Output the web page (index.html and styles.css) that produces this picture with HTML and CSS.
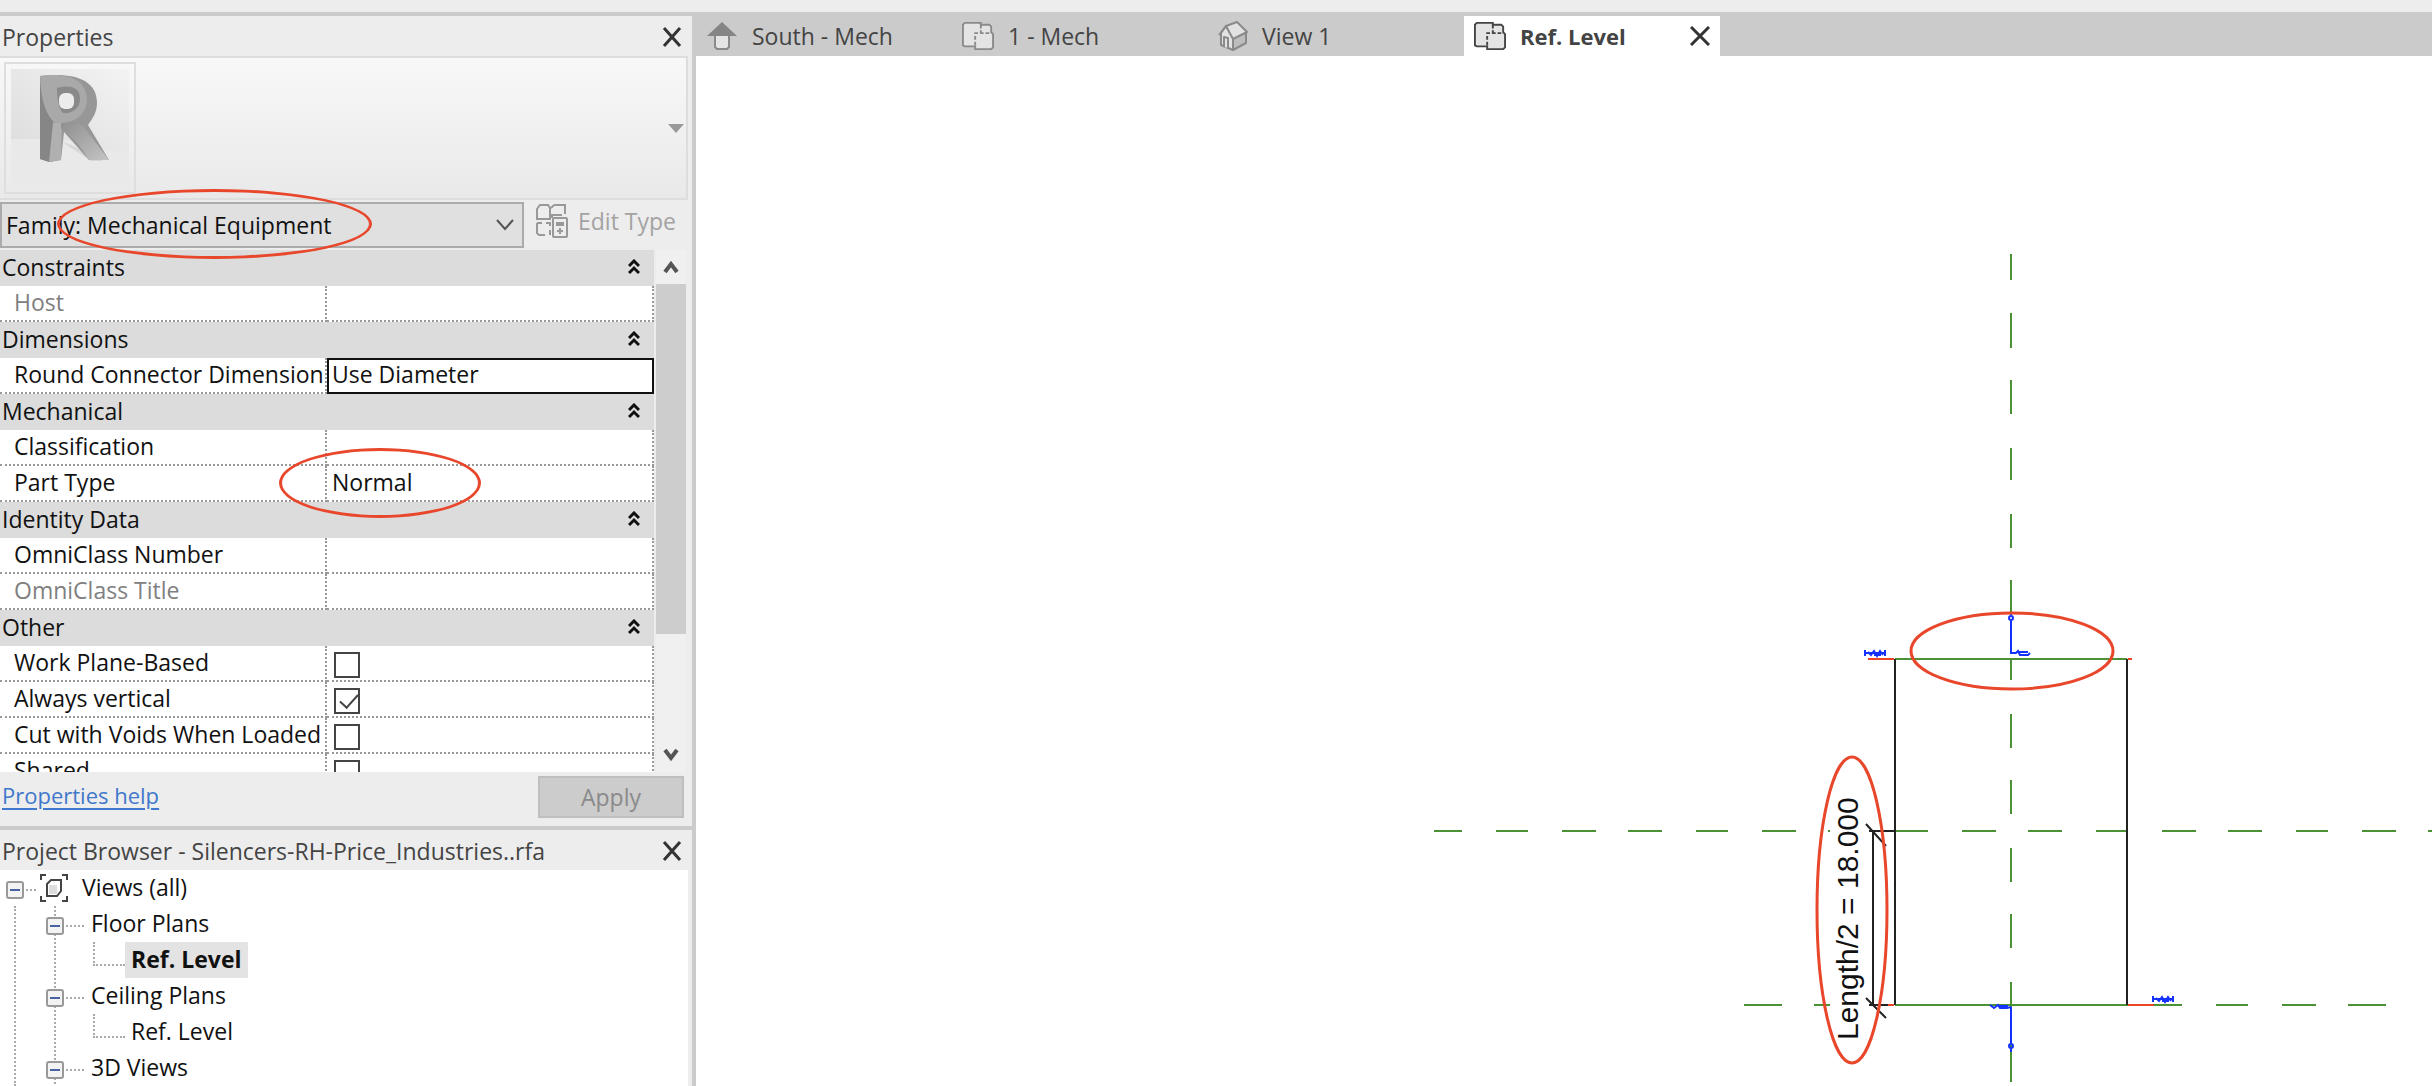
FILE: index.html
```html
<!DOCTYPE html>
<html lang="en">

<head>
    <meta charset="UTF-8">
    <meta name="viewport" content="width=device-width, initial-scale=1.0">
    <title>Ref. Level</title>
    <link rel="stylesheet" href="styles.css">
</head>

<body>
    <div class="ribbon-edge"></div>
    <div class="workspace">
        <aside class="sidebar">
            <section class="palette properties">
                <header class="palette-header">
                    <h2>Properties</h2>
                    <button class="close-btn" aria-label="Close properties">
                        <svg width="20" height="20" viewBox="0 0 20 20"><path d="M2 1 18 19M18 1 2 19" /></svg>
                    </button>
                </header>

                <div class="type-preview">
                    <div class="thumb">
                        <svg width="118" height="118" viewBox="0 0 118 118">
                            <defs>
                                <linearGradient id="wall" x1="0" y1="1" x2="1" y2="0">
                                    <stop offset="0" stop-color="#dcdcdc" />
                                    <stop offset="1" stop-color="#f3f3f3" />
                                </linearGradient>
                                <linearGradient id="leg" x1="0" y1="0" x2="1" y2="1">
                                    <stop offset="0" stop-color="#8e8e8e" />
                                    <stop offset="1" stop-color="#c4c4c4" />
                                </linearGradient>
                            </defs>
                            <path d="M0 0H118V86L48 70H0Z" fill="url(#wall)" />
                            <path d="M0 70H48L118 86V118H0Z" fill="#e9e9e9" />
                            <path d="M50 72 80 92H92L60 76Z" fill="#d6d6d6" />
                            <path d="M29 7C62 3 86 10 86 34C86 44 81 50 77 56L98 91H78L53 63L50 91L39 93L29 90Z" fill="#979797" />
                            <path d="M29 7 42 50V92L38 93L29 90Z" fill="#868686" />
                            <path d="M42 54H51L50 91L38 93Z" fill="#b0b0b0" />
                            <path d="M50 53Q62 50 72 57L98 91H78Q66 70 50 60Z" fill="url(#leg)" />
                            <path d="M29 7C60 3 76 12 76 32C74 48 62 55 44 54Q30 42 29 7Z" fill="#a9a9a9" />
                            <path d="M46 19C62 15 69 20 69 30C69 40 60 45 52 44Q46 38 46 19Z" fill="#8a8a8a" />
                            <rect x="48" y="24" width="15" height="16" rx="6" fill="#ececec" />
                        </svg>
                    </div>
                    <svg class="preview-arrow" width="16" height="9" viewBox="0 0 16 9"><path d="M0 0H16L8 9Z" /></svg>
                </div>

                <div class="type-bar">
                    <button class="family-select">
                        <span>Family: Mechanical Equipment</span>
                        <svg width="18" height="12" viewBox="0 0 18 12"><path d="M1 1 9 10 17 1" /></svg>
                    </button>
                    <button class="edit-type" disabled>
                        <svg width="32" height="34" viewBox="0 0 32 34">
                            <path d="M4 1H12L14 4V15H1V5ZM18 1H29V10M15 4 18 1M16 14V11H26M1 19V29L3 31H9M6 19H1M10 19H14V22M14 26V31" />
                            <rect x="17" y="14" width="14" height="19" rx="1" />
                            <path d="M20 19H28M20 21H28M24 24V30M21 27H27" />
                        </svg>
                        Edit Type
                    </button>
                </div>
                <div class="markup markup-family"></div>

                <div class="grid-area">
                    <div class="grid-scroll">
                        <table class="params">
                            <tbody>
                                <tr class="group"><th colspan="2">Constraints<svg class="fold" viewBox="0 0 12 16"><path d="M1 7 6 2 11 7M1 14 6 9 11 14" /></svg></th></tr>
                                <tr class="dim"><td>Host</td><td></td></tr>
                                <tr class="group"><th colspan="2">Dimensions<svg class="fold" viewBox="0 0 12 16"><path d="M1 7 6 2 11 7M1 14 6 9 11 14" /></svg></th></tr>
                                <tr><td>Round Connector Dimension</td><td class="active">Use Diameter</td></tr>
                                <tr class="group"><th colspan="2">Mechanical<svg class="fold" viewBox="0 0 12 16"><path d="M1 7 6 2 11 7M1 14 6 9 11 14" /></svg></th></tr>
                                <tr><td>Classification</td><td></td></tr>
                                <tr><td>Part Type</td><td>Normal</td></tr>
                                <tr class="group"><th colspan="2">Identity Data<svg class="fold" viewBox="0 0 12 16"><path d="M1 7 6 2 11 7M1 14 6 9 11 14" /></svg></th></tr>
                                <tr><td>OmniClass Number</td><td></td></tr>
                                <tr class="dim"><td>OmniClass Title</td><td></td></tr>
                                <tr class="group"><th colspan="2">Other<svg class="fold" viewBox="0 0 12 16"><path d="M1 7 6 2 11 7M1 14 6 9 11 14" /></svg></th></tr>
                                <tr><td><label for="workPlane">Work Plane-Based</label></td><td><input type="checkbox" id="workPlane"></td></tr>
                                <tr><td><label for="vertical">Always vertical</label></td><td><input type="checkbox" id="vertical" checked></td></tr>
                                <tr><td><label for="voids">Cut with Voids When Loaded</label></td><td><input type="checkbox" id="voids"></td></tr>
                                <tr><td><label for="shared">Shared</label></td><td><input type="checkbox" id="shared"></td></tr>
                            </tbody>
                        </table>
                    </div>
                    <div class="scrollbar">
                        <svg width="16" height="14" viewBox="0 0 16 14"><path d="M2 12 8 4 14 12" /></svg>
                        <div class="track"><div class="scroll-thumb"></div></div>
                        <svg width="16" height="14" viewBox="0 0 16 14"><path d="M2 2 8 10 14 2" /></svg>
                    </div>
                    <div class="markup markup-part"></div>
                </div>

                <footer class="palette-footer">
                    <a href="#">Properties help</a>
                    <button class="apply" disabled>Apply</button>
                </footer>
            </section>

            <section class="palette browser">
                <header class="palette-header">
                    <h2>Project Browser - Silencers-RH-Price_Industries..rfa</h2>
                    <button class="close-btn" aria-label="Close project browser">
                        <svg width="20" height="20" viewBox="0 0 20 20"><path d="M2 1 18 19M18 1 2 19" /></svg>
                    </button>
                </header>
                <ul class="tree">
                    <li>
                        <div class="node root">
                            <button class="toggle" aria-label="Collapse"></button>
                            <i class="dots"></i>
                            <svg class="views-icon" width="28" height="28" viewBox="0 0 28 28">
                                <path d="M1 6V1H6M22 1H27V6M27 22V27H22M6 27H1V22" />
                                <path d="M7 10 11 6H21V17L17 22H7Z" />
                                <path class="face" d="M9 11H17V20H9Z" />
                            </svg>
                            <span>Views (all)</span>
                        </div>
                        <ul>
                            <li>
                                <div class="node"><button class="toggle" aria-label="Collapse"></button><i class="dots"></i><span>Floor Plans</span></div>
                                <div class="leaf"><a href="#" class="current">Ref. Level</a></div>
                            </li>
                            <li>
                                <div class="node"><button class="toggle" aria-label="Collapse"></button><i class="dots"></i><span>Ceiling Plans</span></div>
                                <div class="leaf"><a href="#">Ref. Level</a></div>
                            </li>
                            <li>
                                <div class="node"><button class="toggle" aria-label="Collapse"></button><i class="dots"></i><span>3D Views</span></div>
                            </li>
                        </ul>
                    </li>
                </ul>
            </section>
        </aside>

        <main class="view">
            <nav class="tabs">
                <a href="#" class="tab">
                    <svg width="32" height="30" viewBox="0 0 32 30"><path d="M9 14H23V26L21 28H11L9 26Z" fill="#e4e4e4" stroke="#8a8a8a" stroke-width="2" /><path d="M16 1 31 15H1Z" fill="#858585" /></svg>
                    South - Mech
                </a>
                <a href="#" class="tab">
                    <svg class="plan-icon" width="32" height="30" viewBox="0 0 34 30"><path class="sheet" d="M1 3 3 1H20V3H29L31 5V11L33 13V27L31 29H14V26H3L1 25Z" /><path class="cut" d="M14 25V12H30M20 3V11" /></svg>
                    1 - Mech
                </a>
                <a href="#" class="tab">
                    <svg width="30" height="30" viewBox="0 0 30 30"><g fill="#e2e2e2" stroke="#8a8a8a" stroke-width="2" stroke-linejoin="round"><path d="M3 12 8 5 15 17V29L3 24Z" /><path d="M15 17 28 11V22L15 29Z" fill="#bdbdbd" /><path d="M8 5 19 1 29 11 15 18Z" /><path d="M1 14 8 5" /><path d="M6 26V16L10 17V27" /></g></svg>
                    View 1
                </a>
                <a href="#" class="tab selected">
                    <svg class="plan-icon" width="32" height="30" viewBox="0 0 34 30"><path class="sheet" d="M1 3 3 1H20V3H29L31 5V11L33 13V27L31 29H14V26H3L1 25Z" /><path class="cut" d="M14 25V12H30M20 3V11" /></svg>
                    <span>Ref. Level</span>
                    <svg class="tab-close" width="20" height="20" viewBox="0 0 20 20"><path d="M1 1 19 19M19 1 1 19" /></svg>
                </a>
            </nav>

            <svg class="drawing" viewBox="696 56 1736 1030" preserveAspectRatio="xMidYMid meet">
                <!-- reference planes -->
                <g class="plane">
                    <path d="M2011 254V280M2011 313V348M2011 380V414M2011 448V480M2011 514V548M2011 580V612M2011 660V680M2011 714V748M2011 780V814M2011 848V882M2011 914V948M2011 982V1082" />
                    <path d="M1434 831H1462M1496 831H1528M1562 831H1596M1628 831H1662M1696 831H1728M1762 831H1796M1828 831H1830M1895 831H1928M1962 831H1996M2028 831H2062M2096 831H2127M2162 831H2196M2228 831H2262M2296 831H2328M2362 831H2396M2428 831H2432" />
                    <path d="M1744 1005H1782M1814 1005H1830M1895 1005H2182M2216 1005H2248M2282 1005H2316M2348 1005H2386" />
                    <path d="M1895 659H2127" />
                </g>
                <path class="sketch" d="M1868 659H1894M2128 659H2132M1888 1005H1894M2128 1005H2154" />
                <path class="body" d="M1895 659V1005M2127 659V1005" />

                <!-- connectors -->
                <g class="connector">
                    <path d="M2011 621V653H2014M2011 612V615" /><circle cx="2011" cy="618" r="2" />
                    <path d="M2013 653H2016L2018 651 2020 655H2028L2030 653M2019 652H2028" />
                    <path d="M1865 650V656M1885 650V656M1865 653H1885M1868 652 1871 655 1874 651 1877 656 1880 651 1883 655M1874 655H1881" />
                    <path d="M2011 1007V1043M2011 1049V1052" /><circle cx="2011" cy="1046" r="2" />
                    <path d="M1990 1005 1994 1008 1998 1005 2000 1008H2007L2011 1007M1999 1006H2008" />
                    <path d="M2153 996V1002M2173 996V1002M2153 999H2173M2156 998 2159 1001 2162 997 2165 1002 2168 997 2171 1001M2162 1001H2169" />
                </g>

                <!-- length dimension -->
                <path class="body" d="M1873 831V1005M1869 831H1895M1869 1005H1888" />
                <path class="tick" d="M1866 824 1886 846M1866 998 1886 1018" />
                <text class="dim-text" transform="translate(1858 1040) rotate(-90)">Length/2 = 18.000</text>

                <g class="redline">
                    <ellipse cx="2012" cy="651" rx="101" ry="38" />
                    <ellipse cx="1852" cy="910" rx="35" ry="153" />
                </g>
            </svg>
        </main>
    </div>
</body>

</html>
```
FILE: styles.css
```css
* {
    box-sizing: border-box;
}

body {
    margin: 0;
    height: 100vh;
    display: flex;
    flex-direction: column;
    overflow: hidden;
    background-color: #ededed;
    font-family: "Open Sans", "Noto Sans", sans-serif;
    font-size: 23px;
    line-height: 32px;
    color: #111;
}

button {
    font: inherit;
    color: inherit;
    border: none;
    background: none;
    padding: 0;
}

svg {
    display: block;
    flex: none;
    fill: none;
}

.ribbon-edge {
    flex: none;
    height: 12px;
}

.workspace {
    flex: 1;
    min-height: 0;
    display: flex;
}

.sidebar {
    flex: none;
    width: 696px;
    display: flex;
    flex-direction: column;
    border-right: 4px solid #cbcbcb;
}

.palette {
    position: relative;
    border-top: 4px solid #cbcbcb;
}

.palette-header {
    height: 40px;
    display: flex;
    align-items: center;
    justify-content: space-between;
    padding: 2px 10px 0 2px;
}

.palette-header h2 {
    margin: 0;
    font-size: 23px;
    font-weight: 400;
    color: #444;
}

.close-btn svg,
.tab-close {
    stroke: #333;
    stroke-width: 3;
}

.type-preview {
    height: 144px;
    margin-right: 4px;
    padding: 5px 2px 5px 4px;
    display: flex;
    align-items: center;
    justify-content: space-between;
    border: 2px solid #ddd;
    border-left: none;
    background: linear-gradient(#f8f8f8, #e9e9e9);
}

.thumb {
    width: 132px;
    height: 132px;
    padding: 5px;
    border: 2px solid #dedede;
}

.preview-arrow {
    fill: #999;
}

.type-bar {
    display: flex;
    height: 50px;
    padding-top: 2px;
    gap: 12px;
}

.family-select {
    width: 524px;
    height: 46px;
    padding: 0 8px 0 4px;
    display: flex;
    align-items: center;
    justify-content: space-between;
    border: 2px solid #ababab;
    background-color: #e0e0e0;
}

.family-select svg {
    stroke: #555;
    stroke-width: 2;
}

.edit-type {
    height: 38px;
    display: flex;
    align-items: center;
    gap: 10px;
    color: #a3a3a3;
}

.edit-type svg {
    stroke: #999;
    stroke-width: 2;
}

.markup {
    position: absolute;
    border: 3px solid #e8472b;
    border-radius: 50%;
    pointer-events: none;
}

.markup-family {
    left: 57px;
    top: 173px;
    width: 315px;
    height: 70px;
    z-index: 1;
}

.markup-part {
    left: 279px;
    top: 198px;
    width: 202px;
    height: 70px;
}

.grid-area {
    position: relative;
    display: flex;
    height: 522px;
}

.grid-scroll {
    width: 654px;
    overflow: hidden;
    background-color: #fff;
}

.params {
    width: 100%;
    table-layout: fixed;
    border-spacing: 0;
}

.params th {
    height: 36px;
    padding: 0 14px 2px 2px;
    background-color: #dcdcdc;
    font-weight: 400;
    text-align: left;
}

.params td {
    height: 36px;
    padding: 0 0 2px 5px;
    border-right: 2px dotted #999;
    border-bottom: 2px dotted #999;
    line-height: 30px;
    white-space: nowrap;
}

.params td:first-child {
    padding-left: 14px;
}

.params td.active {
    outline: 2px solid #111;
    outline-offset: -2px;
}

.params .dim td {
    color: #808080;
}

.fold {
    float: right;
    width: 12px;
    height: 16px;
    margin-top: 8px;
    stroke: #111;
    stroke-width: 3;
}

.params input {
    appearance: none;
    display: block;
    width: 26px;
    height: 26px;
    margin: 6px 0 0 2px;
    border: 2px solid #444;
    background-color: #fff;
}

.params input:checked::before {
    content: "";
    display: block;
    width: 8px;
    height: 16px;
    margin: 0 0 0 8px;
    border-right: 2px solid #444;
    border-bottom: 2px solid #444;
    transform: rotate(42deg);
}

.scrollbar {
    width: 30px;
    margin-left: 2px;
    display: flex;
    flex-direction: column;
    align-items: center;
    justify-content: space-between;
    padding: 10px 0;
    background-color: #f0f0f0;
}

.scrollbar svg {
    stroke: #555;
    stroke-width: 4;
}

.track {
    flex: 1;
    width: 100%;
    padding-top: 10px;
}

.scroll-thumb {
    height: 350px;
    background-color: #cdcdcd;
}

.palette-footer {
    height: 54px;
    padding: 4px 8px 0 2px;
    display: flex;
    justify-content: space-between;
}

.palette-footer a {
    padding-top: 3px;
    color: #3f78cc;
    font-size: 22px;
    text-decoration-thickness: 2px;
    text-underline-offset: 4px;
}

.apply {
    width: 146px;
    height: 42px;
    border: 2px solid #bfbfbf;
    background-color: #ccc;
    color: #8a8a8a;
}

.browser {
    flex: 1;
    min-height: 0;
    display: flex;
    flex-direction: column;
}

.tree {
    flex: 1;
    margin: 0 4px 0 0;
    padding: 0 0 0 6px;
    overflow: hidden;
    background-color: #fff;
    list-style: none;
}

.tree ul {
    margin: 0 0 0 8px;
    padding: 0 0 0 30px;
    border-left: 2px dotted #aaa;
    list-style: none;
}

.node {
    display: flex;
    align-items: center;
    height: 36px;
}

.node span {
    padding-bottom: 2px;
}

.toggle {
    width: 18px;
    height: 18px;
    margin-top: 4px;
    display: flex;
    align-items: center;
    justify-content: center;
    border: 2px solid #999;
    border-radius: 3px;
    background-color: #f3f3f3;
}

.toggle::before {
    content: "";
    width: 10px;
    height: 2px;
    background-color: #4a62a0;
}

.dots {
    width: 18px;
    margin: 4px 7px 0 2px;
    border-top: 2px dotted #aaa;
}

.root .dots {
    width: 10px;
    margin-right: 4px;
}

.views-icon {
    margin-right: 14px;
    stroke: #444;
    stroke-width: 2;
}

.views-icon .face {
    fill: #ddd;
    stroke: none;
}

.tree ul li {
    background: linear-gradient(#aaa 50%, transparent 50%) 8px 0 / 2px 4px repeat-y;
}

.leaf {
    display: flex;
    height: 36px;
    padding-left: 47px;
}

.leaf::before {
    content: "";
    width: 30px;
    height: 22px;
    border-left: 2px dotted #aaa;
    border-bottom: 2px dotted #aaa;
}

.leaf a {
    padding: 1px 6px;
    color: inherit;
    text-decoration: none;
}

.leaf .current {
    background-color: #e3e3e3;
    font-weight: 700;
}

.view {
    flex: 1;
    min-width: 0;
    display: flex;
    flex-direction: column;
    background-color: #fff;
}

.tabs {
    flex: none;
    height: 44px;
    display: flex;
    align-items: flex-end;
    background-color: #cbcbcb;
}

.tab {
    width: 256px;
    height: 40px;
    padding: 0 10px;
    display: flex;
    align-items: center;
    gap: 14px;
    color: #444;
    text-decoration: none;
}

.tab.selected {
    background-color: #fff;
    font-size: 22px;
    font-weight: 700;
}

.tab-close {
    margin-left: auto;
}

.plan-icon .sheet {
    fill: #e4e4e4;
    stroke: #8a8a8a;
    stroke-width: 2;
}

.plan-icon .cut {
    stroke: #8a8a8a;
    stroke-width: 2;
    stroke-dasharray: 4 2;
}

.selected .plan-icon path {
    stroke: #444;
}

.drawing {
    flex: 1;
    width: 100%;
    min-height: 0;
}

.plane {
    stroke: #4b9135;
    stroke-width: 2;
}

.sketch {
    stroke: #ee4528;
    stroke-width: 2;
}

.body,
.tick {
    stroke: #222;
    stroke-width: 2;
}

.connector {
    stroke: #1531ff;
    stroke-width: 2;
}

.dim-text {
    fill: #111;
    font-family: "Liberation Sans", Arial, sans-serif;
    font-size: 30px;
}

.redline {
    stroke: #e8472b;
    stroke-width: 3;
}
```
